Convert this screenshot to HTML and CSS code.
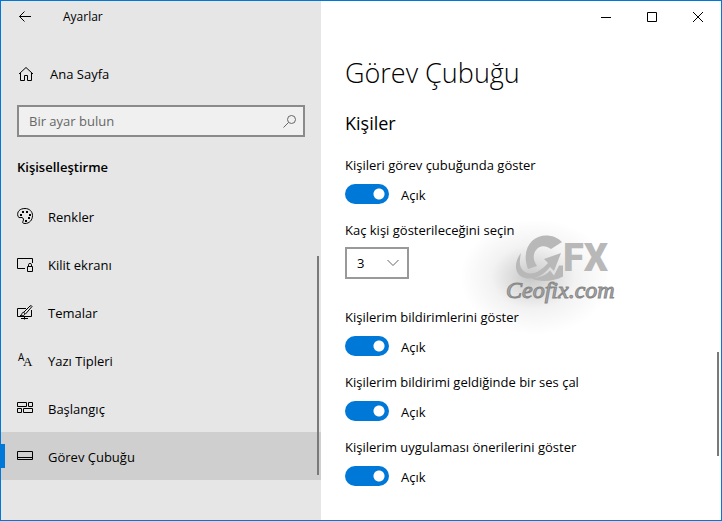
FILE: index.html
```html
<!DOCTYPE html>
<html lang="tr">
<head>
	<meta charset="UTF-8">
	<meta name="viewport" content="width=device-width, initial-scale=1">
	<title>Ayarlar</title>
	<link rel="stylesheet" href="styles.css">
</head>
<body>
<div class="window">
	<aside class="sidebar">
		<header class="titlebar">
			<button type="button" class="back" aria-label="Geri">
				<svg width="14" height="12" viewBox="0 0 14 12"><path d="M13 5.500H1.500M6.500.500l-5 5 5 5"/></svg>
			</button>
			<span class="app-name">Ayarlar</span>
		</header>

		<a href="#" class="home">
			<svg width="16" height="16" viewBox="0 0 16 16"><path d="M1 8l7-6.500L15 8M2.500 7v7.500h4V9.500h3v5h4V7"/></svg>
			Ana Sayfa
		</a>

		<form class="search">
			<input type="text" placeholder="Bir ayar bulun" aria-label="Bir ayar bulun">
			<button type="submit" aria-label="Ara">
				<svg width="14" height="14" viewBox="0 0 14 14"><circle cx="8.500" cy="5.500" r="4"/><path d="M5.500 8.500l-5 5"/></svg>
			</button>
		</form>

		<h2 class="category">Kişiselleştirme</h2>

		<nav class="menu">
			<a href="#">
				<svg width="18" height="18" viewBox="0 0 18 18"><path d="M2 8.500C.500 3.500 4 .500 9 .500c4.500 0 7.500 3 7.500 7 0 4.500-3 8-7.500 8-2 0-3-.800-2-2.300 1-1.700.500-3.200-1-3.700-1.500-.400-2.500 1-4-1z"/><path class="dots" d="M4 6h2v2H4zM6 3h2v2H6zM10 3h2v2h-2zM13 6h2v2h-2zM12 9h2v2h-2zM9 12h2v2H9z"/></svg>
				Renkler
			</a>
			<a href="#">
				<svg width="18" height="18" viewBox="0 0 18 18"><path d="M9 12.500H1.500v-10h15V7M11.500 10.500h5v5h-5zM12.500 10.500V8.500q0-1 1.500-1t1.500 1v2"/></svg>
				Kilit ekranı
			</a>
			<a href="#">
				<svg width="18" height="18" viewBox="0 0 18 18"><path d="M10 4.500H1.500v8h14V6M8.500 12.500v3M5 14.500h7M4 11.500c1 0 1.500-.500 2-2 .500-1.500 2-1.500 2.700-.500.800 1.500-.700 3.500-4.700 2.500zM7.500 8.500L14 2q1.500-1 2 .500L9.500 10"/></svg>
				Temalar
			</a>
			<a href="#">
				<svg width="18" height="18" viewBox="0 0 18 18"><text x="2" y="9" font-size="10">A</text><text class="serif" x="7" y="14" font-size="13">A</text></svg>
				Yazı Tipleri
			</a>
			<a href="#">
				<svg width="18" height="18" viewBox="0 0 18 18"><path d="M1.500 2.500h9v4h-9zM12.500 2.500h4v4h-4zM1.500 8.500h4v4h-4zM7.500 8.500h9v4h-9z"/></svg>
				Başlangıç
			</a>
			<a href="#" class="active" aria-current="page">
				<svg width="18" height="18" viewBox="0 0 18 18"><path d="M1.500 3.500h15v8h-15zM1.500 9.500h15"/></svg>
				Görev Çubuğu
			</a>
		</nav>
		<div class="scroller scroller-menu"></div>
	</aside>

	<main class="content">
		<div class="controls">
			<button type="button" aria-label="Simge durumuna küçült">
				<svg width="10" height="10" viewBox="0 0 10 10"><path d="M0 5.500h10"/></svg>
			</button>
			<button type="button" aria-label="Ekranı kapla">
				<svg width="10" height="10" viewBox="0 0 10 10"><path d="M.500.500h9v9h-9z"/></svg>
			</button>
			<button type="button" aria-label="Kapat">
				<svg width="10" height="10" viewBox="0 0 10 10"><path d="M0 0l10 10M10 0L0 10"/></svg>
			</button>
		</div>

		<div class="page">
			<h1>Görev Çubuğu</h1>
			<h2>Kişiler</h2>

			<div class="setting">
				<label for="show-people">Kişileri görev çubuğunda göster</label>
				<div class="toggle"><input type="checkbox" id="show-people" checked><span>Açık</span></div>
			</div>
			<div class="setting setting-select">
				<label for="people-count">Kaç kişi gösterileceğini seçin</label>
				<div class="select">
					<select id="people-count">
						<option>1</option>
						<option>2</option>
						<option selected>3</option>
						<option>4</option>
						<option>5</option>
					</select>
					<svg width="12" height="8" viewBox="0 0 12 8"><path d="M.500 1L6 6.500 11.500 1"/></svg>
				</div>
			</div>
			<div class="setting">
				<label for="notify">Kişilerim bildirimlerini göster</label>
				<div class="toggle"><input type="checkbox" id="notify" checked><span>Açık</span></div>
			</div>
			<div class="setting">
				<label for="sound">Kişilerim bildirimi geldiğinde bir ses çal</label>
				<div class="toggle"><input type="checkbox" id="sound" checked><span>Açık</span></div>
			</div>
			<div class="setting">
				<label for="suggest">Kişilerim uygulaması önerilerini göster</label>
				<div class="toggle"><input type="checkbox" id="suggest" checked><span>Açık</span></div>
			</div>
		</div>

		<svg class="watermark" width="180" height="130" viewBox="0 0 180 130">
			<defs>
				<radialGradient id="shade" fx=".46">
					<stop offset="0" stop-color="#000" stop-opacity=".22"/>
					<stop offset=".250" stop-color="#000" stop-opacity=".14"/>
					<stop offset=".550" stop-color="#000" stop-opacity=".05"/>
					<stop offset="1" stop-color="#000" stop-opacity="0"/>
				</radialGradient>
			</defs>
			<ellipse cx="76" cy="62" rx="76" ry="58" fill="url(#shade)"/>
			<!-- ring, swoosh with arrow head, lower right part of the ring -->
			<path class="mark" d="M102 27C93 18 79 19 72 26c-7 7-8 18-4 28l9-3c-5-7-4-14 1-18 4-3 9-2 13 1z"/>
			<path class="mark" d="M61 38C53 48 54 62 67 63.500c10 1 18-5 23-11.500l4 4 7-18-17 6 4 4C82 55 73 61 66 57.500 59 54 59 47 61 38z"/>
			<path class="mark" d="M71 63.500c9-1 15-3 19-8l4 5 5-10h4v11c-9 5-23 6-32 2z"/>
			<text class="mark fx" x="103" y="56" font-size="38">FX</text>
			<text class="site" x="46" y="83" font-size="24">Ceofix.com</text>
		</svg>
		<div class="scroller scroller-page"></div>
	</main>
</div>
</body>
</html>
```

FILE: styles.css
```css
*{
	box-sizing: border-box;
}
html,body{
	margin: 0;
	padding: 0;
}
body{
	font-family: "Segoe UI", "Open Sans", "Noto Sans", sans-serif;
	font-size: 13px;
	line-height: 20px;
	color: #000;
	background-color: #fff;
}
h1,h2{
	margin: 0;
}
a{
	color: inherit;
	text-decoration: none;
}
button{
	display: flex;
	align-items: center;
	justify-content: center;
	padding: 0;
	border: 0;
	background: none;
}
svg{
	flex: none;
	overflow: visible;
	fill: none;
	stroke: #000;
}
.window{
	display: grid;
	grid-template-columns: 320px 1fr;
	min-height: 100vh;
	border: 1px solid #0078d7;
}

/* sidebar */
.sidebar{
	position: relative;
	background-color: #e6e6e6;
}
.titlebar{
	display: flex;
	align-items: center;
	height: 32px;
}
.back{
	width: 48px;
	height: 32px;
}
.app-name{
	padding-left: 14px;
	font-size: 12px;
}
.home{
	display: flex;
	align-items: center;
	gap: 16px;
	height: 48px;
	margin-top: 17px;
	padding-left: 17px;
}
.search{
	display: flex;
	height: 32px;
	margin: 7px 16px 0;
	border: 2px solid #8a8a8a;
	background-color: #f0f0f0;
}
.search input{
	flex: 1;
	min-width: 0;
	padding: 0 10px;
	border: 0;
	outline: 0;
	background: none;
	font: inherit;
}
.search input::placeholder{
	color: #666;
	opacity: 1;
}
.search button{
	width: 26px;
}
.search svg{
	stroke: #666;
}
.category{
	margin: 20px 16px 15px;
	font-size: 13px;
	font-weight: 600;
}
.menu a{
	display: flex;
	align-items: center;
	gap: 14px;
	height: 48px;
	padding: 2px 0 0 15px;
}
.menu .active{
	background: linear-gradient(#0078d7, #0078d7) left center / 4px 24px no-repeat #cfcfcf;
}
.menu text{
	fill: #000;
	stroke: none;
}
.menu .serif{
	font-family: "Liberation Serif", serif;
}
.menu .dots{
	fill: #000;
	stroke: none;
}
.scroller{
	position: absolute;
	width: 2px;
	background-color: #7a7a7a;
}
.scroller-menu{
	top: 255px;
	right: 2px;
	height: 219px;
}
.scroller-page{
	top: 351px;
	right: 2px;
	height: 104px;
}

/* content */
.content{
	position: relative;
}
.controls{
	display: flex;
	justify-content: flex-end;
}
.controls button{
	width: 46px;
	height: 32px;
}
.page{
	padding: 20px 24px 16px;
}
h1{
	font-size: 27px;
	font-weight: 300;
	line-height: 40px;
}
.page h2{
	margin: 16px 0 18px;
	font-size: 18px;
	font-weight: 400;
	line-height: 28px;
}
.setting{
	margin-bottom: 16px;
}
.setting:last-child{
	margin-bottom: 0;
}
.setting label{
	display: block;
}
.toggle{
	display: flex;
	gap: 12px;
	height: 20px;
	margin-top: 9px;
	line-height: 22px;
}
.toggle input{
	appearance: none;
	width: 44px;
	height: 20px;
	margin: 0;
	border-radius: 10px;
	background: radial-gradient(circle at 34px 10px, #fff 5px, #0078d7 6px);
}
.toggle input:not(:checked){
	background: radial-gradient(circle at 10px 10px, #fff 5px, #7a7a7a 6px);
}
.setting-select{
	margin-bottom: 28px;
}
.select{
	display: grid;
	align-items: center;
	width: 64px;
	margin-top: 7px;
}
.select select,
.select svg{
	grid-area: 1 / 1;
}
.select select{
	appearance: none;
	width: 100%;
	height: 32px;
	padding: 0 10px;
	border: 2px solid #999;
	border-radius: 0;
	background-color: #fff;
	color: #000;
	font: inherit;
}
.select svg{
	justify-self: end;
	margin-right: 10px;
	stroke: #666;
	pointer-events: none;
}
.watermark{
	position: absolute;
	top: 214px;
	left: 139px;
	stroke: none;
	pointer-events: none;
}
.watermark .mark{
	fill: #b8b8b8;
}
.watermark .fx{
	font-family: Roboto, sans-serif;
	font-weight: 900;
}
.watermark .site{
	font-family: "Liberation Serif", serif;
	font-style: italic;
	fill: #aaa;
	stroke: #888;
	stroke-width: 1px;
}
```
